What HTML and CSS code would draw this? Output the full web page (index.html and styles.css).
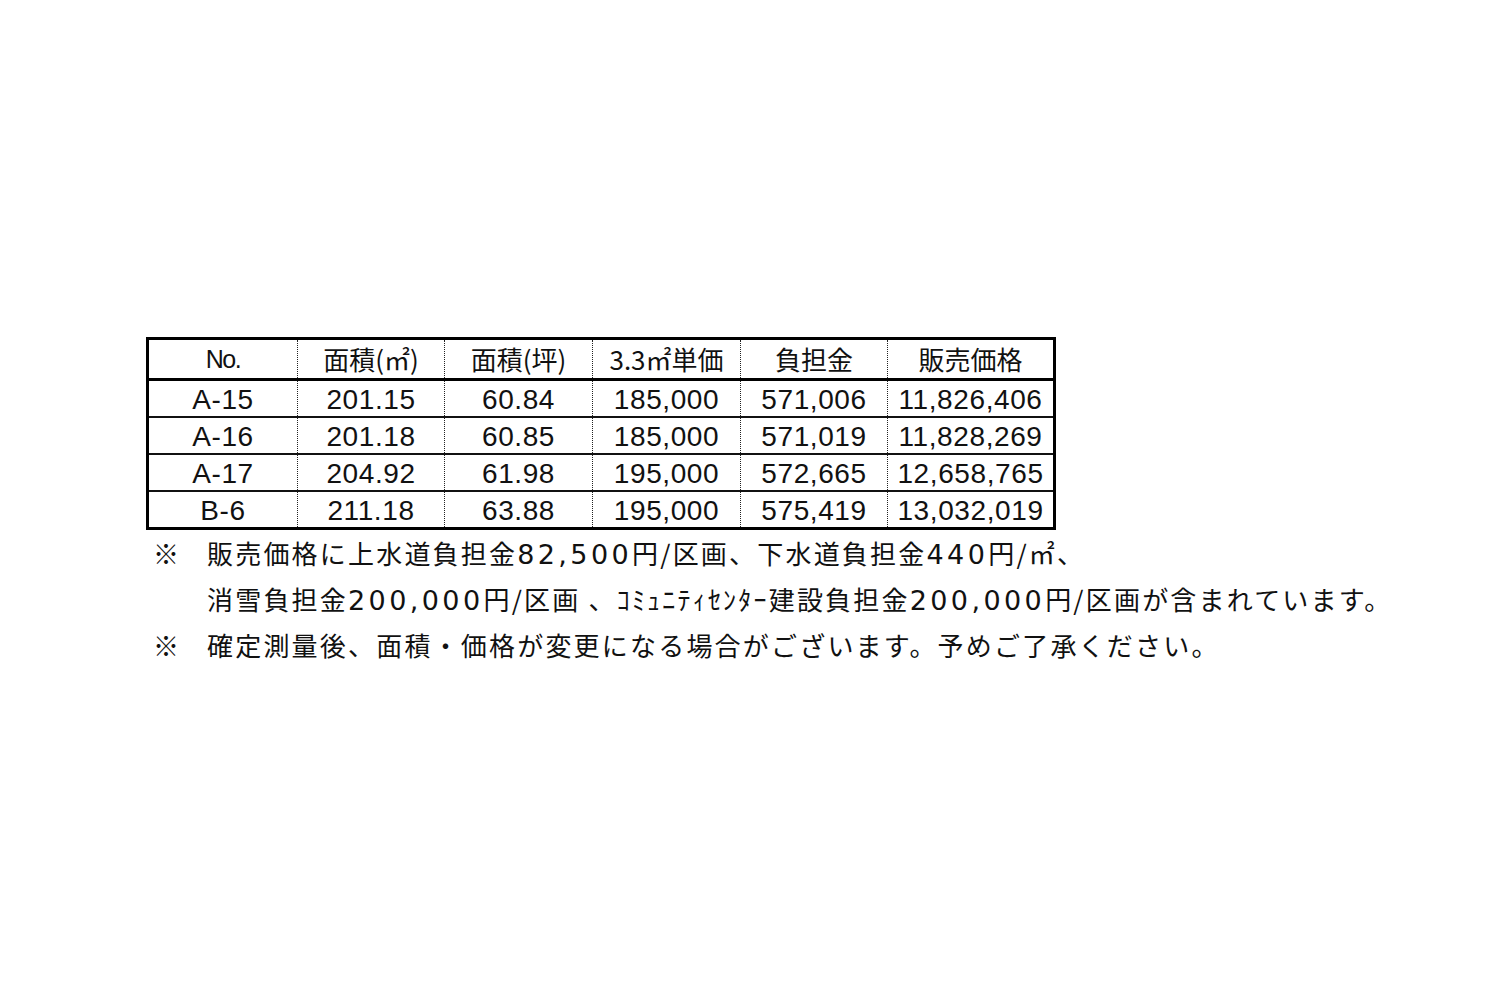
FILE: index.html
```html
<!DOCTYPE html>
<html lang="ja">
<head>
<meta charset="utf-8">
<link rel="stylesheet" href="styles.css">
</head>
<body>
<div class="page">
  <table class="price">
    <colgroup>
      <col class="c1"><col class="c2"><col class="c3"><col class="c4"><col class="c5"><col class="c6">
    </colgroup>
    <thead>
      <tr><th class="no">No.</th><th>面積(㎡)</th><th>面積(坪)</th><th class="unit">3.3㎡単価</th><th>負担金</th><th>販売価格</th></tr>
    </thead>
    <tbody>
      <tr><td>A-15</td><td>201.15</td><td>60.84</td><td>185,000</td><td>571,006</td><td>11,826,406</td></tr>
      <tr><td>A-16</td><td>201.18</td><td>60.85</td><td>185,000</td><td>571,019</td><td>11,828,269</td></tr>
      <tr><td>A-17</td><td>204.92</td><td>61.98</td><td>195,000</td><td>572,665</td><td>12,658,765</td></tr>
      <tr><td>B-6</td><td>211.18</td><td>63.88</td><td>195,000</td><td>575,419</td><td>13,032,019</td></tr>
    </tbody>
  </table>
  <div class="notes">
    <div class="note"><span class="mark">※</span><span class="txt">販売価格に上水道負担金<span class="num">82,500</span>円/区画、下水道負担金<span class="num">440</span>円/㎡、</span></div>
    <div class="note"><span class="mark"></span><span class="txt">消雪負担金<span class="num">200,000</span>円/区画 、ｺﾐｭﾆﾃｨｾﾝﾀｰ建設負担金<span class="num">200,000</span>円/区画が含まれています。</span></div>
    <div class="note"><span class="mark">※</span><span class="txt">確定測量後、面積・価格が変更になる場合がございます。予めご了承ください。</span></div>
  </div>
</div>
</body>
</html>
```
FILE: styles.css
```css
html, body {
  margin: 0;
  padding: 0;
  background: #fff;
}
.page {
  padding: 337px 0 0 146px;
  font-family: "Liberation Sans", "Noto Sans CJK JP", sans-serif;
  color: #111;
}
.price {
  border-collapse: collapse;
  border: 3px solid #000;
  table-layout: fixed;
  width: 907px;
}
.c1 { width: 150px; }
.c2 { width: 147px; }
.c3 { width: 148px; }
.c4 { width: 148px; }
.c5 { width: 147px; }
.c6 { width: 167px; }
.price th, .price td {
  padding: 0;
  text-align: center;
  border-left: 1px dotted #222;
  border-right: 1px dotted #222;
  white-space: nowrap;
}
.price th {
  height: 38px;
  font-family: "Noto Sans CJK JP", sans-serif;
  font-weight: 400;
  font-size: 26px;
  line-height: 38px;
  border-bottom: 3px solid #000;
}
.price th.no {
  font-family: "Liberation Sans Narrow", "Liberation Sans", sans-serif;
  font-size: 25px;
  letter-spacing: -1.5px;
}
.price td {
  height: 33px;
  font-size: 28px;
  letter-spacing: 0.6px;
  line-height: 33px;
  padding-top: 2px;
  border-bottom: 2px solid #111;
}
.price tbody tr:last-child td {
  border-bottom: 3px solid #000;
}
.price tr > :first-child { border-left: 3px solid #000; }
.price tr > :last-child { border-right: 3px solid #000; }
.notes {
  padding-top: 5px;
  font-family: "Noto Sans CJK JP", sans-serif;
  font-size: 26px;
  color: #111;
}
.note {
  display: flex;
  height: 46px;
  line-height: 36px;
}
.mark {
  width: 61px;
  padding-left: 7px;
  box-sizing: border-box;
  flex: none;
  letter-spacing: 0;
}
.txt {
  white-space: nowrap;
  letter-spacing: 2.2px;
}
.num {
  font-family: "DejaVu Sans", "Noto Sans CJK JP", sans-serif;
  font-size: 27px;
  letter-spacing: 3.4px;
}
```
